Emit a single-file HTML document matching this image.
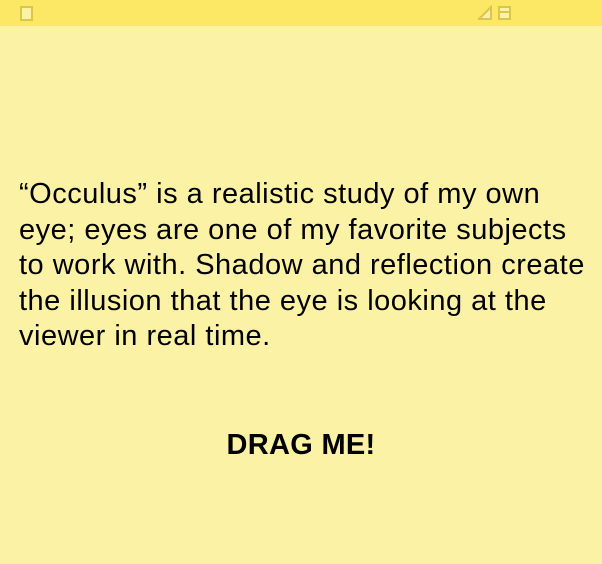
<!DOCTYPE html>
<html><head><style>
html,body{margin:0;padding:0;width:602px;height:564px;overflow:hidden;background:#fcf2a5;font-family:"Liberation Sans",Arial,sans-serif;}
.bar{position:absolute;left:0;top:0;width:602px;height:26px;background:#fce864;}
.sq{position:absolute;left:20px;top:6px;width:9px;height:11px;border:2px solid #d9c64c;background:#fcf2a5;}
.p{position:absolute;left:19px;top:177px;width:590px;white-space:nowrap;font-size:29px;line-height:35.5px;letter-spacing:0.5px;color:#000;}
.d{position:absolute;left:0;top:428px;width:602px;text-align:center;font-size:29px;line-height:35px;font-weight:bold;letter-spacing:0.3px;}
</style></head><body>
<div class="bar"><div class="sq"></div>
<svg style="position:absolute;left:478px;top:5px" width="34" height="16">
<polygon points="1,14 13,2 13,14" fill="#fcf2a5" stroke="#d9c64c" stroke-width="2"/>
<rect x="21" y="2" width="11" height="12" fill="#fcf2a5" stroke="#d9c64c" stroke-width="2"/>
<line x1="21" y1="7" x2="32" y2="7" stroke="#d9c64c" stroke-width="2"/>
</svg></div>
<div class="p">“Occulus” is a realistic study of my own<br>eye; eyes are one of my favorite subjects<br>to work with. Shadow and reflection create<br>the illusion that the eye is looking at the<br>viewer in real time.</div>
<div class="d">DRAG ME!</div>
</body></html>
